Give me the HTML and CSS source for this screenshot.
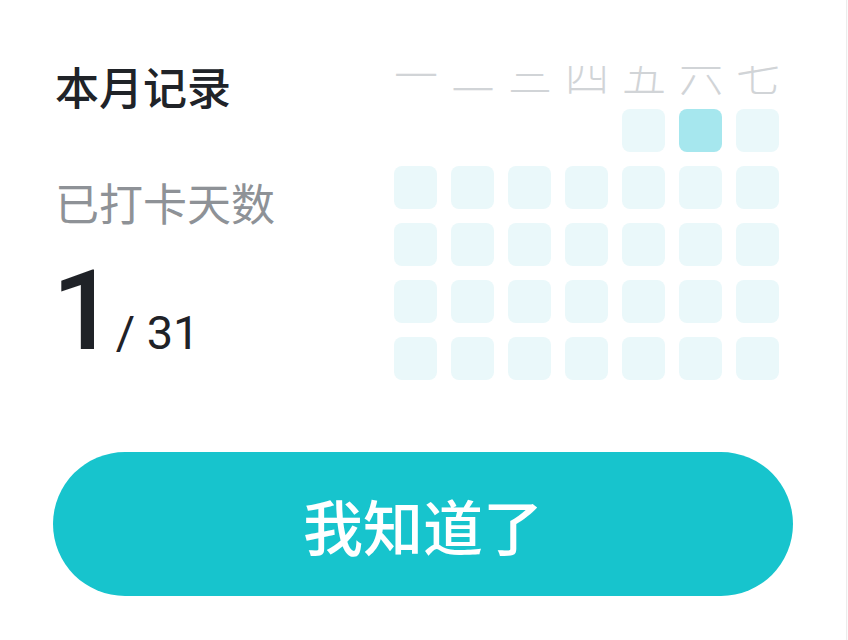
FILE: index.html
```html
<!DOCTYPE html>
<html lang="zh-CN">
<head>
<meta charset="UTF-8">
<meta name="viewport" content="width=device-width, initial-scale=1.0">
<title>本月记录</title>
<link rel="stylesheet" href="styles.css">
</head>
<body>
    <div class="page">
        <div class="record">
            <div class="summary">
                <div class="title">本月记录</div>
                <div class="label">已打卡天数</div>
                <div class="count"><span class="done">1</span><span class="total">/ 31</span></div>
            </div>
            <div class="calendar">
                <div class="week">一</div>
                <div class="week">二</div>
                <div class="week">三</div>
                <div class="week">四</div>
                <div class="week">五</div>
                <div class="week">六</div>
                <div class="week">七</div>

                <div class="blank"></div>
                <div class="blank"></div>
                <div class="blank"></div>
                <div class="blank"></div>
                <div class="day"></div>
                <div class="day checked"></div>
                <div class="day"></div>

                <div class="day"></div>
                <div class="day"></div>
                <div class="day"></div>
                <div class="day"></div>
                <div class="day"></div>
                <div class="day"></div>
                <div class="day"></div>

                <div class="day"></div>
                <div class="day"></div>
                <div class="day"></div>
                <div class="day"></div>
                <div class="day"></div>
                <div class="day"></div>
                <div class="day"></div>

                <div class="day"></div>
                <div class="day"></div>
                <div class="day"></div>
                <div class="day"></div>
                <div class="day"></div>
                <div class="day"></div>
                <div class="day"></div>

                <div class="day"></div>
                <div class="day"></div>
                <div class="day"></div>
                <div class="day"></div>
                <div class="day"></div>
                <div class="day"></div>
                <div class="day"></div>
            </div>
        </div>
        <button class="ok-button">我知道了</button>
    </div>
</body>
</html>
```

FILE: styles.css
```css
body, html {
    margin: 0;
    padding: 0;
    height: 100%;
    overflow: hidden;
}

body {
    font-family: "Noto Sans CJK SC", "Noto Sans", sans-serif;
    background: #fbfbfb;
}

.page {
    width: 740px;
    height: 588px;
    padding: 52px 53px 0 53px;
    background: #ffffff;
    border-right: 1px solid #ececec;
}

.record {
    display: flex;
    justify-content: space-between;
    align-items: flex-start;
    margin-right: 14px;
}

.summary {
    padding-left: 2px;
}

.title {
    margin-top: 12px;
    font-size: 44px;
    font-weight: 500;
    line-height: 44px;
    color: #202328;
}

.label {
    margin-top: 72px;
    font-size: 44px;
    line-height: 44px;
    color: #8e9297;
}

.count {
    margin-top: 31px;
    height: 112px;
    font-family: Roboto, "Liberation Sans", sans-serif;
    font-size: 112px;
    font-weight: 500;
    line-height: 112px;
    color: #1f2227;
    white-space: nowrap;
}

.done {
    margin-left: -3px;
}

.total {
    font-size: 47px;
    font-weight: 400;
    line-height: 1;
}

.calendar {
    display: grid;
    grid-template-columns: repeat(7, 43px);
    grid-auto-rows: 43px;
    gap: 14px;
}

.week {
    overflow: hidden;
    clip-path: inset(14px 0 0 0);
    font-size: 44px;
    font-weight: 300;
    line-height: 43px;
    text-align: center;
    color: #d1d4d7;
}

.day {
    border-radius: 8px;
    background: #eaf8fa;
}

.day.checked {
    background: #a6e7ee;
}

.ok-button {
    display: block;
    width: 740px;
    height: 144px;
    margin-top: 72px;
    padding: 0;
    border: none;
    border-radius: 72px;
    background: #17c4cd;
    color: #ffffff;
    font-family: "Noto Sans CJK SC", "Noto Sans", sans-serif;
    font-size: 60px;
    font-weight: 500;
    cursor: pointer;
}
```
